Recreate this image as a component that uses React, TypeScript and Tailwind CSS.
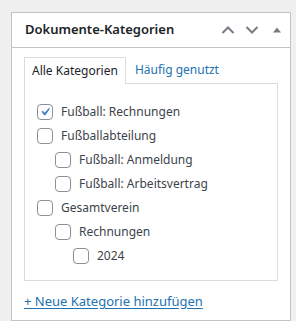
import React from "react";

const items: { label: string; level: number; checked?: boolean }[] = [
  { label: "Fußball: Rechnungen", level: 0, checked: true },
  { label: "Fußballabteilung", level: 0 },
  { label: "Fußball: Anmeldung", level: 1 },
  { label: "Fußball: Arbeitsvertrag", level: 1 },
  { label: "Gesamtverein", level: 0 },
  { label: "Rechnungen", level: 1 },
  { label: "2024", level: 2 },
];

function Box({ checked }: { checked?: boolean }) {
  return (
    <span className="relative flex h-4 w-4 shrink-0 items-center justify-center rounded-[4px] border border-[#8c8f94] bg-white">
      {checked && (
        <svg width="16" height="16" viewBox="0 0 20 20" className="absolute">
          <path d="M14.83 4.89l1.34.94-5.81 8.38H9.02L5.78 9.67l1.34-1.25 2.57 2.4z" fill="#3582c4" />
        </svg>
      )}
    </span>
  );
}

export default function App() {
  const font = { fontFamily: '"Noto Sans", "Segoe UI", sans-serif' };
  return (
    <div className="h-[321px] w-[296px] overflow-hidden bg-[#f0f0f1] pl-[11px] pt-[12px]" style={font}>
      <div className="w-[280px] border border-[#c3c4c7] bg-white">
        <div className="flex h-[35px] items-center border-b border-[#c3c4c7] pl-[13px] pr-[8px]">
          <h2 className="flex-1 text-[13px] font-semibold text-[#1d2327]">Dokumente-Kategorien</h2>
          <div className="flex items-center">
            <span className="flex h-[26px] w-[16px] items-center justify-center">
              <svg width="14" height="10" viewBox="0 0 14 10"><path d="M1.5 8 7 2.5 12.5 8" fill="none" stroke="#787c82" strokeWidth="2" /></svg>
            </span>
            <span className="ml-[8px] flex h-[26px] w-[16px] items-center justify-center">
              <svg width="14" height="10" viewBox="0 0 14 10"><path d="M1.5 2 7 7.5 12.5 2" fill="none" stroke="#787c82" strokeWidth="2" /></svg>
            </span>
            <span className="ml-[12px] flex h-[26px] w-[10px] items-center justify-center">
              <svg width="10" height="8" viewBox="0 0 10 8"><path d="M5 1.5 9 6.5H1z" fill="#787c82" /></svg>
            </span>
          </div>
        </div>
        <div className="px-[12px] pt-[9px] pb-[10px]">
          <div className="flex text-[12px] leading-[17px]">
            <div className="relative z-10 -mb-px border border-b-0 border-[#dcdcde] bg-white px-[7px] pt-[4px] pb-[5px] text-[#1d2327]">
              Alle Kategorien
            </div>
            <div className="px-[9px] pt-[4px] pb-[5px] text-[#2271b1]">Häufig genutzt</div>
          </div>
          <div className="w-[254px] border border-[#dcdcde] px-[12px] pt-[20px] pb-[16px]">
            <ul className="flex flex-col gap-[8px]">
              {items.map((it) => (
                <li
                  key={it.label}
                  className="flex h-[16px] items-center gap-[8px] text-[12px] text-[#3c434a]"
                  style={{ paddingLeft: it.level * 18 }}
                >
                  <Box checked={it.checked} />
                  <span>{it.label}</span>
                </li>
              ))}
            </ul>
          </div>
          <div className="mt-[11px] text-[13px] leading-[18px]">
            <a className="text-[#2271b1] underline underline-offset-2">+ Neue Kategorie hinzufügen</a>
          </div>
        </div>
      </div>
    </div>
  );
}
